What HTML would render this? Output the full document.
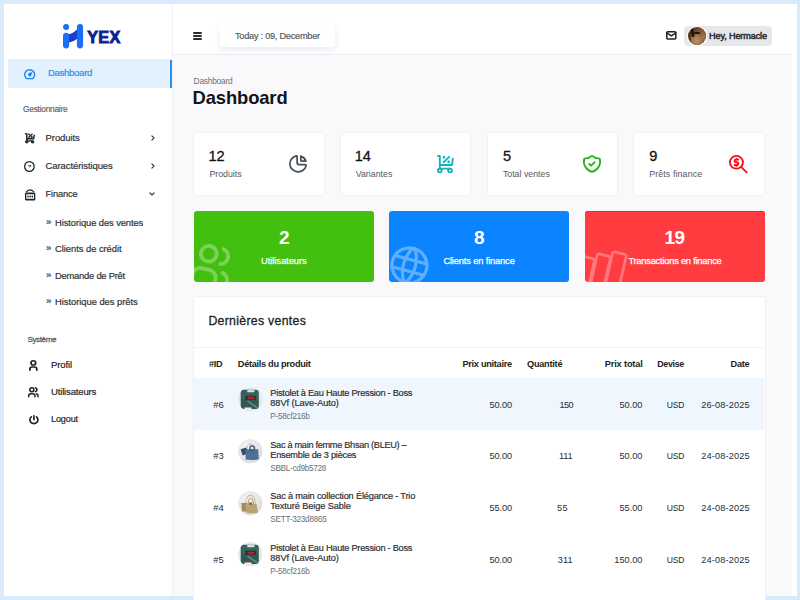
<!DOCTYPE html><html><head><meta charset="utf-8"><style>
html,body{margin:0;padding:0;width:800px;height:600px;overflow:hidden;background:#d9eafd;font-family:"Liberation Sans", sans-serif}
.b{position:absolute}
.i{position:absolute;overflow:visible}
.t{position:absolute;white-space:pre}
</style></head><body>
<div class="b" style="left:4px;top:4px;width:793px;height:592px;background:#fff"></div>
<div class="b" style="left:173px;top:55px;width:619px;height:541px;background:#f9f9fb"></div>
<div class="b" style="left:173px;top:54px;width:619px;height:1px;background:#eceef1"></div>
<div class="b" style="left:172px;top:4px;width:1px;height:592px;background:#eef0f3"></div>
<div class="b" style="left:8px;top:59px;width:164px;height:28.5px;background:#e3f0fd"></div>
<div class="b" style="left:170px;top:60px;width:2px;height:27.5px;background:#2b8cf2"></div>
<svg class="i" style="left:60px;top:20px;width:30px;height:32px" viewBox="60 20 30 32">
      <path d="M68 34.5 C71.5 34 75 31.5 78.5 28 L78.5 37.5 C75.5 40.5 72 42 68 42.5 Z" fill="#1c3dcc"/>
      <circle cx="66.1" cy="27" r="3.05" fill="#1b6ef7"/>
      <rect x="63" y="32.8" width="6.2" height="15.6" rx="3.1" fill="#1b6ef7"/>
      <rect x="76.9" y="24" width="6.2" height="24.4" rx="3.1" fill="#1b6ef7"/>
    </svg>
<div class="b" style="left:193.2px;top:32.2px;width:8.600000000000023px;height:1.7999999999999972px;background:#2b2f33;border-radius:1px"></div>
<div class="b" style="left:193.2px;top:35.3px;width:8.600000000000023px;height:1.7999999999999972px;background:#2b2f33;border-radius:1px"></div>
<div class="b" style="left:193.2px;top:38.4px;width:8.600000000000023px;height:1.7999999999999972px;background:#2b2f33;border-radius:1px"></div>
<div class="b" style="left:220.4px;top:24.6px;width:114.6px;height:22.4px;background:#fff;border-radius:3px;box-shadow:0 3px 7px rgba(70,80,160,.12)"></div>
<svg class="i" style="left:665.60px;top:31.20px;width:10.60px;height:8.80px;color:#1f2328;" viewBox="1.500 3.500 21.000 17.000" preserveAspectRatio="none" fill="none" stroke="currentColor" stroke-width="3" stroke-linecap="round" stroke-linejoin="round"><path d="M3 7a2 2 0 0 1 2 -2h14a2 2 0 0 1 2 2v10a2 2 0 0 1 -2 2h-14a2 2 0 0 1 -2 -2v-10z"/><path d="M3 7l9 6l9 -6"/></svg>
<div class="b" style="left:684px;top:25.5px;width:87.60000000000002px;height:20.5px;background:#e5e7ea;border-radius:4px"></div>
<div class="b" style="left:686.5px;top:26px;width:20.799999999999955px;height:20.700000000000003px;background:#fff;border-radius:50%"></div>
<div class="b" style="left:688px;top:27px;width:18px;height:18px;border-radius:50%;overflow:hidden;background:#4e321e"><div style="position:absolute;left:-2px;top:-2px;width:22px;height:22px;background:radial-gradient(circle at 78% 55%, #a07450 0%, #7a5232 40%, transparent 70%)"></div><div style="position:absolute;left:3px;top:4px;width:11px;height:16px;border-radius:45% 45% 30% 30%;background:radial-gradient(circle at 50% 60%, #c09362 0%, #9c7046 50%, #5e3e24 100%)"></div><div style="position:absolute;left:3px;top:1px;width:3px;height:9px;background:#22150c;border-radius:2px;transform:rotate(-10deg)"></div><div style="position:absolute;left:6px;top:4.5px;width:6px;height:2.5px;background:#24160d;border-radius:1px"></div><div style="position:absolute;left:8px;top:7.5px;width:2px;height:1.6px;background:#c0606a;border-radius:1px"></div></div>
<svg class="i" style="left:24.00px;top:68.70px;width:11.30px;height:10.30px;color:#1a85f5;" viewBox="1.750 1.753 20.500 18.497" preserveAspectRatio="none" fill="none" stroke="currentColor" stroke-width="2.5" stroke-linecap="round" stroke-linejoin="round"><path d="M6.34 19A9 9 0 1 1 17.66 19Z"/><path d="M17 7L14.4 14A3 3 0 1 1 10 9.6Z" fill="currentColor" stroke-width="0.3"/></svg>
<svg class="i" style="left:24.80px;top:132.70px;width:9.90px;height:10.60px;color:#1f2328;" viewBox="2.600 1.600 18.800 20.800" preserveAspectRatio="none" fill="none" stroke="currentColor" stroke-width="2.8" stroke-linecap="round" stroke-linejoin="round"><path d="M4 19a2 2 0 1 0 4 0a2 2 0 1 0 -4 0"/><path d="M15 19a2 2 0 1 0 4 0a2 2 0 1 0 -4 0"/><path d="M17 17h-11v-14h-2"/><path d="M20 6l-1 7h-13"/><path d="M10 10l6 -6"/><path d="M10.5 4.5m-.5 0a.5 .5 0 1 0 1 0a.5 .5 0 1 0 -1 0"/><path d="M15.5 9.5m-.5 0a.5 .5 0 1 0 1 0a.5 .5 0 1 0 -1 0"/></svg>
<svg class="i" style="left:24.20px;top:161.00px;width:10.80px;height:11.00px;color:#1f2328;" viewBox="1.800 1.797 20.400 20.406" preserveAspectRatio="none" fill="none" stroke="currentColor" stroke-width="2.4" stroke-linecap="round" stroke-linejoin="round"><path d="M3 12a9 9 0 1 0 18 0a9 9 0 1 0 -18 0"/><path d="M10 10.5h5M14 10.5l-1 2.5" stroke-width="1.4"/></svg>
<svg class="i" style="left:24.70px;top:189.00px;width:10.30px;height:11.50px;color:#1f2328;" viewBox="1.700 4.200 20.600 18.100" preserveAspectRatio="none" fill="none" stroke="currentColor" stroke-width="2.6" stroke-linecap="round" stroke-linejoin="round"><path d="M4.5 8.5Q12 2.5 19.5 8.5" stroke-width="1.8"/><rect x="3" y="11" width="18" height="10" rx="0.8"/><g fill="currentColor" stroke="none"><rect x="6.3" y="14.6" width="2.8" height="2.8"/><rect x="10.6" y="14.6" width="2.8" height="2.8"/><rect x="14.9" y="14.6" width="2.8" height="2.8"/></g></svg>
<svg class="i" style="left:149px;top:134px;width:8px;height:8px" viewBox="0 0 8 8" fill="none" stroke="#33373b" stroke-width="1.15" stroke-linecap="round" stroke-linejoin="round"><path d="M2.9 1.8L5 4L2.9 6.2"/></svg>
<svg class="i" style="left:149px;top:162.4px;width:8px;height:8px" viewBox="0 0 8 8" fill="none" stroke="#33373b" stroke-width="1.15" stroke-linecap="round" stroke-linejoin="round"><path d="M2.9 1.8L5 4L2.9 6.2"/></svg>
<svg class="i" style="left:148px;top:190px;width:8px;height:8px" viewBox="0 0 8 8" fill="none" stroke="#33373b" stroke-width="1.15" stroke-linecap="round" stroke-linejoin="round"><path d="M1.8 2.9L4 5L6.2 2.9"/></svg>
<svg class="i" style="left:29.20px;top:359.80px;width:8.70px;height:11.00px;color:#1f2328;" viewBox="4.500 1.500 15.000 21.000" preserveAspectRatio="none" fill="none" stroke="currentColor" stroke-width="3" stroke-linecap="round" stroke-linejoin="round"><path d="M8 7a4 4 0 1 0 8 0a4 4 0 1 0 -8 0"/><path d="M6 21v-2a4 4 0 0 1 4 -4h4a4 4 0 0 1 4 4v2"/></svg>
<svg class="i" style="left:28.20px;top:387.20px;width:10.80px;height:10.40px;color:#1f2328;" viewBox="1.500 1.500 21.000 21.000" preserveAspectRatio="none" fill="none" stroke="currentColor" stroke-width="3" stroke-linecap="round" stroke-linejoin="round"><path d="M5 7a4 4 0 1 0 8 0a4 4 0 1 0 -8 0"/><path d="M3 21v-2a4 4 0 0 1 4 -4h4a4 4 0 0 1 4 4v2"/><path d="M16 3.13a4 4 0 0 1 0 7.75"/><path d="M21 21v-2a4 4 0 0 0 -3 -3.85"/></svg>
<svg class="i" style="left:28.50px;top:414.60px;width:9.80px;height:9.40px;color:#1f2328;" viewBox="2.650 2.400 18.700 18.871" preserveAspectRatio="none" fill="none" stroke="currentColor" stroke-width="3.2" stroke-linecap="round" stroke-linejoin="round"><path d="M7 6a7.75 7.75 0 1 0 10 0"/><path d="M12 4l0 8"/></svg>
<div class="b" style="left:193px;top:132.3px;width:131.7px;height:63.69999999999999px;background:#fff;border:1px solid #eff1f4;border-radius:4px;box-sizing:border-box"></div>
<div class="b" style="left:339.6px;top:132.3px;width:131.7px;height:63.69999999999999px;background:#fff;border:1px solid #eff1f4;border-radius:4px;box-sizing:border-box"></div>
<div class="b" style="left:486.6px;top:132.3px;width:131.69999999999993px;height:63.69999999999999px;background:#fff;border:1px solid #eff1f4;border-radius:4px;box-sizing:border-box"></div>
<div class="b" style="left:633.4px;top:132.3px;width:131.69999999999993px;height:63.69999999999999px;background:#fff;border:1px solid #eff1f4;border-radius:4px;box-sizing:border-box"></div>
<svg class="i" style="left:289.30px;top:155.00px;width:18.00px;height:17.70px;color:#444e58;" viewBox="2.083 2.244 19.667 19.674" preserveAspectRatio="none" fill="none" stroke="currentColor" stroke-width="1.9" stroke-linecap="round" stroke-linejoin="round"><path d="M10 3.2a9 9 0 1 0 10.8 10.8a1 1 0 0 0 -1 -1h-6.8a2 2 0 0 1 -2 -2v-7a.9 .9 0 0 0 -1 -.8"/><path d="M15 3.5a9 9 0 0 1 5.5 5.5h-4.5a1 1 0 0 1 -1 -1v-4.5"/></svg>
<svg class="i" style="left:437.00px;top:154.60px;width:16.80px;height:18.20px;color:#17b1b6;" viewBox="3.000 2.000 18.000 20.000" preserveAspectRatio="none" fill="none" stroke="currentColor" stroke-width="2" stroke-linecap="round" stroke-linejoin="round"><path d="M4 19a2 2 0 1 0 4 0a2 2 0 1 0 -4 0"/><path d="M15 19a2 2 0 1 0 4 0a2 2 0 1 0 -4 0"/><path d="M17 17h-11v-14h-2"/><path d="M20 6l-1 7h-13"/><path d="M10 10l6 -6"/><path d="M10.5 4.5m-.5 0a.5 .5 0 1 0 1 0a.5 .5 0 1 0 -1 0"/><path d="M15.5 9.5m-.5 0a.5 .5 0 1 0 1 0a.5 .5 0 1 0 -1 0"/></svg>
<svg class="i" style="left:583.00px;top:155.00px;width:18.00px;height:17.70px;color:#1db40e;" viewBox="2.063 2.050 19.874 19.900" preserveAspectRatio="none" fill="none" stroke="currentColor" stroke-width="1.9" stroke-linecap="round" stroke-linejoin="round"><path d="M9 12l2 2l4 -4"/><path d="M12 3a12 12 0 0 0 8.5 3a12 12 0 0 1 -8.5 15a12 12 0 0 1 -8.5 -15a12 12 0 0 0 8.5 -3"/></svg>
<svg class="i" style="left:729.40px;top:154.50px;width:18.60px;height:18.20px;color:#f2121c;" viewBox="2.000 2.000 20.000 20.000" preserveAspectRatio="none" fill="none" stroke="currentColor" stroke-width="2" stroke-linecap="round" stroke-linejoin="round"><path d="M3 10a7 7 0 1 0 14 0a7 7 0 1 0 -14 0"/><path d="M21 21l-6 -6"/><path d="M12 7h-2.5a1.5 1.5 0 0 0 0 3h1a1.5 1.5 0 0 1 0 3h-2.5"/><path d="M10 13v1m0 -8v1"/></svg>
<div class="b" style="left:194px;top:211px;width:180px;height:71px;background:#43bf0f;border-radius:3px;overflow:hidden"><svg style="position:absolute;left:-4.9px;top:30.3px;width:47px;height:47px;transform:rotate(12deg);opacity:.3" viewBox="0 0 24 24" fill="none" stroke="#fff" stroke-width="2" stroke-linecap="round" stroke-linejoin="round"><path d="M5 7a4 4 0 1 0 8 0a4 4 0 1 0 -8 0"/><path d="M3 21v-2a4 4 0 0 1 4 -4h4a4 4 0 0 1 4 4v2"/><path d="M16 3.13a4 4 0 0 1 0 7.75"/><path d="M21 21v-2a4 4 0 0 0 -3 -3.85"/></svg></div>
<div class="b" style="left:389px;top:211px;width:180px;height:71px;background:#0b84ff;border-radius:3px;overflow:hidden"><svg style="position:absolute;left:-3.2px;top:30.6px;width:46.8px;height:46.8px;transform:rotate(15deg);opacity:.35" viewBox="0 0 24 24" fill="none" stroke="#fff" stroke-width="1.65" stroke-linecap="round" stroke-linejoin="round"><path d="M3 12a9 9 0 1 0 18 0a9 9 0 0 0 -18 0"/><path d="M3.6 9h16.8"/><path d="M3.6 15h16.8"/><path d="M11.5 3a17 17 0 0 0 0 18"/><path d="M12.5 3a17 17 0 0 1 0 18"/></svg></div>
<div class="b" style="left:585px;top:211px;width:180px;height:71px;background:#ff3d41;border-radius:3px;overflow:hidden;box-shadow:inset 0 1px 0 #f3262b"><svg style="position:absolute;left:0;top:0;width:180px;height:71px;opacity:.3" viewBox="0 0 180 71" fill="none" stroke="#fff" stroke-width="2.8"><g transform="translate(-2 -2.5) rotate(13 26 60)"><rect x="-3" y="54" width="13" height="40" rx="2.5"/><rect x="11.5" y="48" width="13.5" height="45" rx="2.5"/><rect x="26" y="42.5" width="14" height="50" rx="2.5"/></g></svg></div>
<div class="b" style="left:193.2px;top:296.3px;width:572.5999999999999px;height:323.7px;background:#fff;border:1px solid #eff1f4;border-radius:3px;box-sizing:border-box"></div>
<div class="b" style="left:194px;top:347.2px;width:570px;height:1.0px;background:#f1f3f6"></div>
<div class="b" style="left:194px;top:377.8px;width:570px;height:52.19999999999999px;background:#f0f6fd"></div>
<svg class="i" style="left:238.30px;top:387.20px;width:24.6px;height:24.6px" viewBox="0 0 24.6 24.6"><clipPath id="c399"><circle cx="12.3" cy="12.3" r="12.3"/></clipPath><g clip-path="url(#c399)"><defs><radialGradient id="gT" cx="50%" cy="45%" r="60%"><stop offset="0" stop-color="#f6f7f7"/><stop offset="1" stop-color="#dfe3e3"/></radialGradient></defs><circle cx="12.3" cy="12.3" r="12.3" fill="url(#gT)"/><rect x="2.7" y="2.7" width="18.1" height="19.2" rx="3.2" fill="#2f5a53"/><rect x="3.5" y="3.5" width="16.5" height="9" rx="2.5" fill="#35645c"/><rect x="9.1" y="3" width="7.5" height="2.3" rx="1" fill="#d6dfdd"/><rect x="7.5" y="8.8" width="10.2" height="4" fill="#1f2826"/><rect x="9.3" y="9.6" width="7" height="2.7" fill="#b3262c"/><path d="M9.5 14 L19.5 21" stroke="#5d8a80" stroke-width="1.6"/><rect x="9" y="18" width="2" height="2" fill="#b3262c"/><rect x="6.5" y="20.5" width="7" height="2.5" fill="#e9eeee"/></g></svg>
<svg class="i" style="left:238.30px;top:439.10px;width:24.6px;height:24.6px" viewBox="0 0 24.6 24.6"><clipPath id="c451"><circle cx="12.3" cy="12.3" r="12.3"/></clipPath><g clip-path="url(#c451)"><defs><radialGradient id="gB" cx="40%" cy="35%" r="65%"><stop offset="0" stop-color="#f7f7f7"/><stop offset="1" stop-color="#dcdcdc"/></radialGradient></defs><circle cx="12.3" cy="12.3" r="12.3" fill="url(#gB)"/><path d="M8.8 10.5 C8.8 3, 15.2 3, 15.2 10.5" fill="none" stroke="#a9afb3" stroke-width="0.9"/><path d="M2.6 10.2 L8.2 8.6 L9.8 14.6 L4.6 16.6 Z" fill="#2f5174"/><path d="M7.6 10.2 L20.2 10.2 L20.8 20.2 Q14 21.6 7.6 20.6 Z" fill="#4d7195"/><circle cx="14.2" cy="9.2" r="2.4" fill="none" stroke="#36577a" stroke-width="1.3"/></g></svg>
<svg class="i" style="left:238.30px;top:490.60px;width:24.6px;height:24.6px" viewBox="0 0 24.6 24.6"><clipPath id="c502"><circle cx="12.3" cy="12.3" r="12.3"/></clipPath><g clip-path="url(#c502)"><defs><radialGradient id="gG" cx="40%" cy="35%" r="65%"><stop offset="0" stop-color="#f7f7f6"/><stop offset="1" stop-color="#dededb"/></radialGradient></defs><circle cx="12.3" cy="12.3" r="12.3" fill="url(#gG)"/><path d="M7.5 13 C7.5 1.5, 17.5 1.5, 17.5 13" fill="none" stroke="#cdbd9c" stroke-width="1.1"/><path d="M10 13 C10 5.5, 15.5 5.5, 15.5 13" fill="none" stroke="#9f8a63" stroke-width="1"/><path d="M3.2 12 L9 12 L9.5 20.5 L4 20.5 Z" fill="#a58c5f"/><path d="M7.8 13 L18.5 13 L20.2 21.5 Q14 22.8 8.5 22 Z" fill="#bba372"/><rect x="11" y="11.5" width="3.2" height="2.2" fill="#7d6844"/></g></svg>
<svg class="i" style="left:238.30px;top:542.40px;width:24.6px;height:24.6px" viewBox="0 0 24.6 24.6"><clipPath id="c554"><circle cx="12.3" cy="12.3" r="12.3"/></clipPath><g clip-path="url(#c554)"><defs><radialGradient id="gT2" cx="50%" cy="45%" r="60%"><stop offset="0" stop-color="#f6f7f7"/><stop offset="1" stop-color="#dfe3e3"/></radialGradient></defs><circle cx="12.3" cy="12.3" r="12.3" fill="url(#gT2)"/><rect x="2.7" y="2.7" width="18.1" height="19.2" rx="3.2" fill="#2f5a53"/><rect x="3.5" y="3.5" width="16.5" height="9" rx="2.5" fill="#35645c"/><rect x="9.1" y="3" width="7.5" height="2.3" rx="1" fill="#d6dfdd"/><rect x="7.5" y="8.8" width="10.2" height="4" fill="#1f2826"/><rect x="9.3" y="9.6" width="7" height="2.7" fill="#b3262c"/><path d="M9.5 14 L19.5 21" stroke="#5d8a80" stroke-width="1.6"/><rect x="9" y="18" width="2" height="2" fill="#b3262c"/><rect x="6.5" y="20.5" width="7" height="2.5" fill="#e9eeee"/></g></svg>
<div class="t" style="left:48.00px;top:68.07px;font-size:9.6px;font-weight:400;color:#2b8cf2;letter-spacing:-0.325px;-webkit-text-stroke:0.18px;line-height:9.6px;">Dashboard</div>
<div class="t" style="left:23.00px;top:105.17px;font-size:8.3px;font-weight:400;color:#5f6368;letter-spacing:-0.221px;-webkit-text-stroke:0.18px;line-height:8.3px;">Gestionnaire</div>
<div class="t" style="left:45.60px;top:132.56px;font-size:9.5px;font-weight:400;color:#2b2f33;letter-spacing:-0.100px;-webkit-text-stroke:0.18px;line-height:9.5px;">Produits</div>
<div class="t" style="left:45.60px;top:160.96px;font-size:9.5px;font-weight:400;color:#2b2f33;letter-spacing:-0.099px;-webkit-text-stroke:0.18px;line-height:9.5px;">Caractéristiques</div>
<div class="t" style="left:45.60px;top:189.53px;font-size:9.3px;font-weight:400;color:#2b2f33;letter-spacing:-0.151px;-webkit-text-stroke:0.18px;line-height:9.3px;">Finance</div>
<div class="t" style="left:46.00px;top:216.97px;font-size:9.6px;font-weight:400;color:#2b2f33;letter-spacing:0.000px;-webkit-text-stroke:0.18px;line-height:9.6px;">»</div>
<div class="t" style="left:55.00px;top:218.04px;font-size:9.4px;font-weight:400;color:#2b2f33;letter-spacing:-0.093px;-webkit-text-stroke:0.18px;line-height:9.4px;">Historique des ventes</div>
<div class="t" style="left:46.00px;top:243.37px;font-size:9.6px;font-weight:400;color:#2b2f33;letter-spacing:0.000px;-webkit-text-stroke:0.18px;line-height:9.6px;">»</div>
<div class="t" style="left:55.00px;top:244.44px;font-size:9.4px;font-weight:400;color:#2b2f33;letter-spacing:-0.038px;-webkit-text-stroke:0.18px;line-height:9.4px;">Clients de crédit</div>
<div class="t" style="left:46.00px;top:269.97px;font-size:9.6px;font-weight:400;color:#2b2f33;letter-spacing:0.000px;-webkit-text-stroke:0.18px;line-height:9.6px;">»</div>
<div class="t" style="left:55.00px;top:271.04px;font-size:9.4px;font-weight:400;color:#2b2f33;letter-spacing:-0.234px;-webkit-text-stroke:0.18px;line-height:9.4px;">Demande de Prêt</div>
<div class="t" style="left:46.00px;top:295.97px;font-size:9.6px;font-weight:400;color:#2b2f33;letter-spacing:0.000px;-webkit-text-stroke:0.18px;line-height:9.6px;">»</div>
<div class="t" style="left:55.00px;top:297.04px;font-size:9.4px;font-weight:400;color:#2b2f33;letter-spacing:-0.036px;-webkit-text-stroke:0.18px;line-height:9.4px;">Historique des prêts</div>
<div class="t" style="left:27.40px;top:335.74px;font-size:8.1px;font-weight:400;color:#5f6368;letter-spacing:-0.397px;-webkit-text-stroke:0.3px;line-height:8.1px;">Système</div>
<div class="t" style="left:51.00px;top:359.87px;font-size:9.6px;font-weight:400;color:#1f2328;letter-spacing:-0.145px;-webkit-text-stroke:0.18px;line-height:9.6px;">Profil</div>
<div class="t" style="left:51.00px;top:386.87px;font-size:9.6px;font-weight:400;color:#1f2328;letter-spacing:-0.187px;-webkit-text-stroke:0.18px;line-height:9.6px;">Utilisateurs</div>
<div class="t" style="left:51.00px;top:415.21px;font-size:9.2px;font-weight:400;color:#1f2328;letter-spacing:-0.190px;-webkit-text-stroke:0.18px;line-height:9.2px;">Logout</div>
<div class="t" style="left:235.00px;top:32.41px;font-size:9.2px;font-weight:400;color:#55595e;letter-spacing:-0.254px;-webkit-text-stroke:0.18px;line-height:9.2px;">Today : 09, December</div>
<div class="t" style="left:709.00px;top:32.30px;font-size:9.1px;font-weight:400;color:#2a2d31;letter-spacing:-0.117px;-webkit-text-stroke:0.3px;line-height:9.1px;-webkit-text-stroke:0.5px;">Hey, Hermacle</div>
<div class="t" style="left:193.60px;top:76.89px;font-size:8.4px;font-weight:400;color:#6b6f75;letter-spacing:-0.239px;line-height:8.4px;">Dashboard</div>
<div class="t" style="left:192.60px;top:88.82px;font-size:18.4px;font-weight:700;color:#111418;letter-spacing:-0.128px;line-height:18.4px;">Dashboard</div>
<div class="t" style="left:208.40px;top:148.94px;font-size:14.6px;font-weight:400;color:#111418;letter-spacing:0.000px;-webkit-text-stroke:0.18px;line-height:14.6px;-webkit-text-stroke:0.3px;">12</div>
<div class="t" style="left:209.40px;top:169.55px;font-size:8.8px;font-weight:400;color:#55595e;letter-spacing:-0.010px;line-height:8.8px;">Produits</div>
<div class="t" style="left:354.70px;top:148.94px;font-size:14.6px;font-weight:400;color:#111418;letter-spacing:0.000px;-webkit-text-stroke:0.18px;line-height:14.6px;-webkit-text-stroke:0.3px;">14</div>
<div class="t" style="left:355.70px;top:169.55px;font-size:8.8px;font-weight:400;color:#55595e;letter-spacing:0.011px;line-height:8.8px;">Variantes</div>
<div class="t" style="left:502.90px;top:148.94px;font-size:14.6px;font-weight:400;color:#111418;letter-spacing:0.000px;-webkit-text-stroke:0.18px;line-height:14.6px;-webkit-text-stroke:0.3px;">5</div>
<div class="t" style="left:502.90px;top:169.55px;font-size:8.8px;font-weight:400;color:#55595e;letter-spacing:-0.004px;line-height:8.8px;">Total ventes</div>
<div class="t" style="left:649.20px;top:148.94px;font-size:14.6px;font-weight:400;color:#111418;letter-spacing:0.000px;-webkit-text-stroke:0.18px;line-height:14.6px;-webkit-text-stroke:0.3px;">9</div>
<div class="t" style="left:649.20px;top:169.55px;font-size:8.8px;font-weight:400;color:#55595e;letter-spacing:0.129px;line-height:8.8px;">Prêts finance</div>
<div class="t" style="left:279.00px;top:228.42px;font-size:19px;font-weight:700;color:#ffffff;letter-spacing:0.000px;line-height:19px;">2</div>
<div class="t" style="left:261.00px;top:256.88px;font-size:9.3px;font-weight:400;color:#ffffff;letter-spacing:-0.030px;-webkit-text-stroke:0.18px;line-height:9.3px;-webkit-text-stroke:0.25px;">Utilisateurs</div>
<div class="t" style="left:474.00px;top:228.42px;font-size:19px;font-weight:700;color:#ffffff;letter-spacing:0.000px;line-height:19px;">8</div>
<div class="t" style="left:443.38px;top:256.88px;font-size:9.3px;font-weight:400;color:#ffffff;letter-spacing:-0.146px;-webkit-text-stroke:0.18px;line-height:9.3px;-webkit-text-stroke:0.25px;">Clients en finance</div>
<div class="t" style="left:664.38px;top:228.42px;font-size:19px;font-weight:700;color:#ffffff;letter-spacing:-0.317px;line-height:19px;">19</div>
<div class="t" style="left:628.38px;top:256.88px;font-size:9.3px;font-weight:400;color:#ffffff;letter-spacing:-0.225px;-webkit-text-stroke:0.18px;line-height:9.3px;-webkit-text-stroke:0.25px;">Transactions en finance</div>
<div class="t" style="left:208.40px;top:314.79px;font-size:12.3px;font-weight:400;color:#1c1f23;letter-spacing:0.300px;-webkit-text-stroke:0.3px;line-height:12.3px;">Dernières ventes</div>
<div class="t" style="left:209.00px;top:359.81px;font-size:9.2px;font-weight:700;color:#1c1f23;letter-spacing:-0.331px;line-height:9.2px;">#ID</div>
<div class="t" style="left:237.80px;top:359.81px;font-size:9.2px;font-weight:700;color:#1c1f23;letter-spacing:-0.296px;line-height:9.2px;">Détails du produit</div>
<div class="t" style="left:462.40px;top:359.81px;font-size:9.2px;font-weight:700;color:#1c1f23;letter-spacing:-0.283px;line-height:9.2px;">Prix unitaire</div>
<div class="t" style="left:527.00px;top:359.81px;font-size:9.2px;font-weight:700;color:#1c1f23;letter-spacing:-0.250px;line-height:9.2px;">Quantité</div>
<div class="t" style="left:604.70px;top:359.81px;font-size:9.2px;font-weight:700;color:#1c1f23;letter-spacing:-0.129px;line-height:9.2px;">Prix total</div>
<div class="t" style="left:657.20px;top:360.07px;font-size:8.9px;font-weight:700;color:#1c1f23;letter-spacing:-0.317px;line-height:8.9px;">Devise</div>
<div class="t" style="left:730.60px;top:359.81px;font-size:9.2px;font-weight:700;color:#1c1f23;letter-spacing:-0.268px;line-height:9.2px;">Date</div>
<div class="t" style="left:213.30px;top:399.94px;font-size:9.4px;font-weight:400;color:#2a2d31;letter-spacing:0.000px;line-height:9.4px;">#6</div>
<div class="t" style="left:270.30px;top:388.71px;font-size:9.2px;font-weight:400;color:#2a2d31;letter-spacing:-0.244px;-webkit-text-stroke:0.18px;line-height:9.2px;">Pistolet à Eau Haute Pression - Boss</div>
<div class="t" style="left:270.30px;top:398.51px;font-size:9.2px;font-weight:400;color:#2a2d31;letter-spacing:-0.060px;-webkit-text-stroke:0.18px;line-height:9.2px;">88Vf (Lave-Auto)</div>
<div class="t" style="left:270.30px;top:412.96px;font-size:8.2px;font-weight:400;color:#6b6f75;letter-spacing:-0.258px;line-height:8.2px;">P-58cf216b</div>
<div class="t" style="left:489.60px;top:401.11px;font-size:9.2px;font-weight:400;color:#2a2d31;letter-spacing:-0.120px;line-height:9.2px;">50.00</div>
<div class="t" style="left:559.40px;top:401.11px;font-size:9.2px;font-weight:400;color:#2a2d31;letter-spacing:-0.510px;line-height:9.2px;">150</div>
<div class="t" style="left:619.42px;top:401.11px;font-size:9.2px;font-weight:400;color:#2a2d31;letter-spacing:0.000px;line-height:9.2px;">50.00</div>
<div class="t" style="left:666.70px;top:400.62px;font-size:8.6px;font-weight:400;color:#2a2d31;letter-spacing:-0.169px;line-height:8.6px;">USD</div>
<div class="t" style="left:701.20px;top:401.11px;font-size:9.2px;font-weight:400;color:#2a2d31;letter-spacing:0.168px;line-height:9.2px;">26-08-2025</div>
<div class="t" style="left:213.30px;top:450.94px;font-size:9.4px;font-weight:400;color:#2a2d31;letter-spacing:0.000px;line-height:9.4px;">#3</div>
<div class="t" style="left:270.30px;top:440.51px;font-size:9.2px;font-weight:400;color:#2a2d31;letter-spacing:-0.304px;-webkit-text-stroke:0.18px;line-height:9.2px;">Sac à main femme Bhsan (BLEU) –</div>
<div class="t" style="left:270.30px;top:451.31px;font-size:9.2px;font-weight:400;color:#2a2d31;letter-spacing:-0.227px;-webkit-text-stroke:0.18px;line-height:9.2px;">Ensemble de 3 pièces</div>
<div class="t" style="left:270.30px;top:464.76px;font-size:8.2px;font-weight:400;color:#6b6f75;letter-spacing:-0.306px;line-height:8.2px;">SBBL-cd9b5728</div>
<div class="t" style="left:489.60px;top:452.11px;font-size:9.2px;font-weight:400;color:#2a2d31;letter-spacing:-0.120px;line-height:9.2px;">50.00</div>
<div class="t" style="left:559.00px;top:452.11px;font-size:9.2px;font-weight:400;color:#2a2d31;letter-spacing:-0.127px;line-height:9.2px;">111</div>
<div class="t" style="left:619.42px;top:452.11px;font-size:9.2px;font-weight:400;color:#2a2d31;letter-spacing:0.000px;line-height:9.2px;">50.00</div>
<div class="t" style="left:666.70px;top:451.62px;font-size:8.6px;font-weight:400;color:#2a2d31;letter-spacing:-0.169px;line-height:8.6px;">USD</div>
<div class="t" style="left:701.20px;top:452.11px;font-size:9.2px;font-weight:400;color:#2a2d31;letter-spacing:0.168px;line-height:9.2px;">24-08-2025</div>
<div class="t" style="left:213.30px;top:502.94px;font-size:9.4px;font-weight:400;color:#2a2d31;letter-spacing:0.000px;line-height:9.4px;">#4</div>
<div class="t" style="left:270.30px;top:492.41px;font-size:9.2px;font-weight:400;color:#2a2d31;letter-spacing:-0.170px;-webkit-text-stroke:0.18px;line-height:9.2px;">Sac à main collection Élégance - Trio</div>
<div class="t" style="left:270.30px;top:502.21px;font-size:9.2px;font-weight:400;color:#2a2d31;letter-spacing:-0.090px;-webkit-text-stroke:0.18px;line-height:9.2px;">Texturé Beige Sable</div>
<div class="t" style="left:270.30px;top:515.66px;font-size:8.2px;font-weight:400;color:#6b6f75;letter-spacing:-0.256px;line-height:8.2px;">SETT-323d8865</div>
<div class="t" style="left:489.60px;top:504.11px;font-size:9.2px;font-weight:400;color:#2a2d31;letter-spacing:-0.120px;line-height:9.2px;">55.00</div>
<div class="t" style="left:556.90px;top:504.11px;font-size:9.2px;font-weight:400;color:#2a2d31;letter-spacing:0.490px;line-height:9.2px;">55</div>
<div class="t" style="left:619.42px;top:504.11px;font-size:9.2px;font-weight:400;color:#2a2d31;letter-spacing:0.000px;line-height:9.2px;">55.00</div>
<div class="t" style="left:666.70px;top:503.62px;font-size:8.6px;font-weight:400;color:#2a2d31;letter-spacing:-0.169px;line-height:8.6px;">USD</div>
<div class="t" style="left:701.20px;top:504.11px;font-size:9.2px;font-weight:400;color:#2a2d31;letter-spacing:0.168px;line-height:9.2px;">24-08-2025</div>
<div class="t" style="left:213.30px;top:554.94px;font-size:9.4px;font-weight:400;color:#2a2d31;letter-spacing:0.000px;line-height:9.4px;">#5</div>
<div class="t" style="left:270.30px;top:544.41px;font-size:9.2px;font-weight:400;color:#2a2d31;letter-spacing:-0.244px;-webkit-text-stroke:0.18px;line-height:9.2px;">Pistolet à Eau Haute Pression - Boss</div>
<div class="t" style="left:270.30px;top:554.21px;font-size:9.2px;font-weight:400;color:#2a2d31;letter-spacing:-0.060px;-webkit-text-stroke:0.18px;line-height:9.2px;">88Vf (Lave-Auto)</div>
<div class="t" style="left:270.30px;top:567.66px;font-size:8.2px;font-weight:400;color:#6b6f75;letter-spacing:-0.258px;line-height:8.2px;">P-58cf216b</div>
<div class="t" style="left:489.60px;top:556.11px;font-size:9.2px;font-weight:400;color:#2a2d31;letter-spacing:-0.120px;line-height:9.2px;">50.00</div>
<div class="t" style="left:557.70px;top:556.11px;font-size:9.2px;font-weight:400;color:#2a2d31;letter-spacing:0.182px;line-height:9.2px;">311</div>
<div class="t" style="left:614.31px;top:556.11px;font-size:9.2px;font-weight:400;color:#2a2d31;letter-spacing:0.000px;line-height:9.2px;">150.00</div>
<div class="t" style="left:666.70px;top:555.62px;font-size:8.6px;font-weight:400;color:#2a2d31;letter-spacing:-0.169px;line-height:8.6px;">USD</div>
<div class="t" style="left:701.20px;top:556.11px;font-size:9.2px;font-weight:400;color:#2a2d31;letter-spacing:0.168px;line-height:9.2px;">24-08-2025</div>
<div class="t" style="left:87.20px;top:29.49px;font-size:16.2px;font-weight:700;color:#0d1e8e;letter-spacing:0.303px;line-height:16.2px;-webkit-text-stroke:0.9px #0d1e8e;">YEX</div>
</body></html>
